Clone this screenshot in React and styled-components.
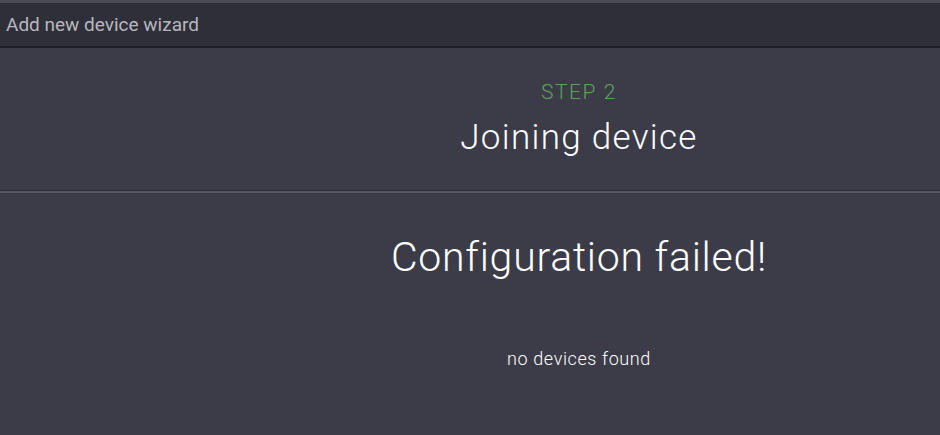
import React from 'react';
import styled, { createGlobalStyle } from 'styled-components';

const GlobalStyle = createGlobalStyle`
  html, body {
    margin: 0;
    padding: 0;
    background: #3c3c48;
    font-family: 'Roboto', 'Liberation Sans', sans-serif;
  }
`;

const Page = styled.div`
  width: 940px;
  height: 435px;
  background: #3c3c48;
  overflow: hidden;
`;

const Header = styled.div`
  height: 43px;
  background: #2f2f3a;
  border-top: 3px solid #4a4a55;
  border-bottom: 2px solid #1f1f27;
  display: flex;
  align-items: center;
  padding-left: 6px;
  color: #b7b7be;
  font-size: 19px;
  font-weight: 400;
`;

const Section = styled.div`
  padding-left: 218px;
  text-align: center;
  color: #ffffff;
  border-bottom: ${(p) => (p.divided ? '1px solid #2c2c36' : 'none')};
  box-shadow: ${(p) => (p.divided ? '0 2px 0 #575763' : 'none')};
`;

const TitleBlock = styled(Section)`
  height: 143px;
  padding-top: 32px;
  box-sizing: border-box;
`;

const Step = styled.div`
  color: #5aa15a;
  font-size: 21px;
  font-weight: 300;
  line-height: 24px;
  letter-spacing: 1.6px;
`;

const Title = styled.div`
  font-size: 35px;
  font-weight: 300;
  line-height: 44px;
  letter-spacing: 1.3px;
  margin-top: 12px;
`;

const Result = styled.div`
  font-size: 41px;
  font-weight: 300;
  line-height: 56px;
  letter-spacing: 0.75px;
  margin-top: 38px;
`;

const Message = styled.div`
  font-size: 18px;
  font-weight: 300;
  line-height: 22px;
  letter-spacing: 0.6px;
  margin-top: 63px;
`;

export default function App() {
  return (
    <Page>
      <GlobalStyle />
      <Header>Add new device wizard</Header>
      <TitleBlock divided>
        <Step>STEP 2</Step>
        <Title>Joining device</Title>
      </TitleBlock>
      <Section>
        <Result>Configuration failed!</Result>
        <Message>no devices found</Message>
      </Section>
    </Page>
  );
}
